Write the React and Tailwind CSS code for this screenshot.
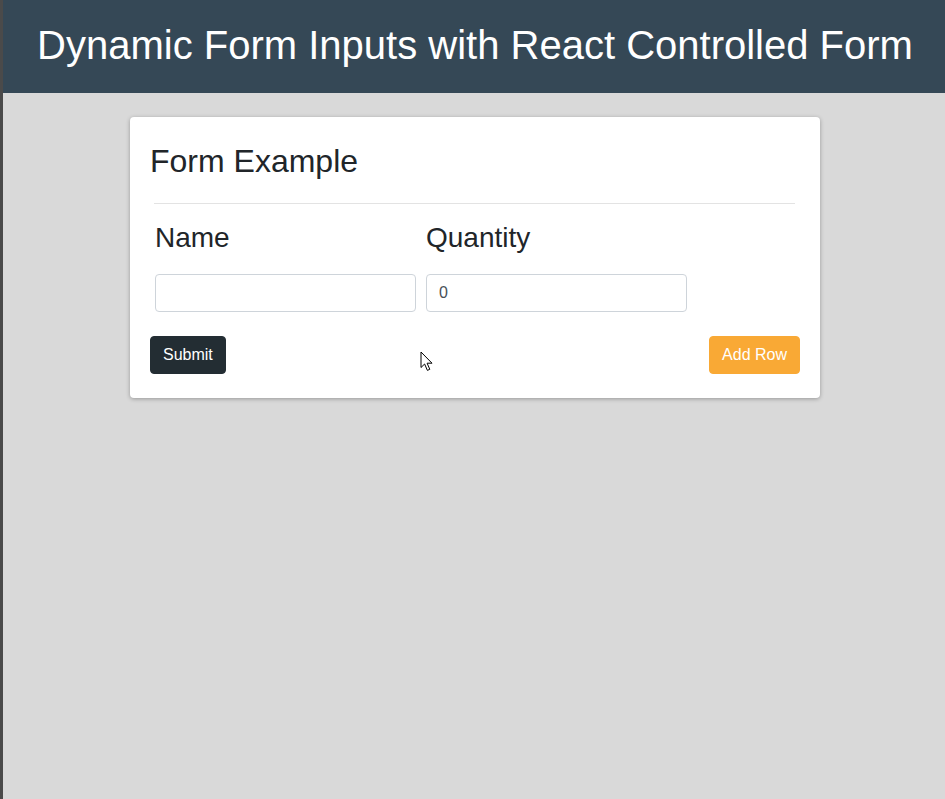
import React from 'react';

function Cursor() {
  return (
    <svg
      className="absolute left-[290px] top-[234px] pointer-events-none"
      width="14"
      height="21"
      viewBox="0 0 14 21"
    >
      <path
        d="M1 1 L1 16.5 L4.6 13 L7.4 19.4 L9.8 18.3 L7.1 12.2 L12 12.2 Z"
        fill="#ffffff"
        stroke="#000000"
        strokeWidth="1"
        strokeLinejoin="miter"
      />
    </svg>
  );
}

export default function App() {
  const rows = [{ name: '', quantity: 0 }];

  return (
    <div className="min-h-[799px] bg-[#d9d9d9] border-l-[3px] border-[#4a4a4a] font-['Liberation_Sans',Arial,sans-serif]">
      <header className="h-[93px] bg-[#354856] pt-[21px] pl-[2px] text-center">
        <h1 className="text-white text-[40px] leading-[48px]">
          Dynamic Form Inputs with React Controlled Form
        </h1>
      </header>

      <main className="flex justify-center pt-[24px] pl-[2px]">
        <div className="relative w-[690px] bg-white rounded-[4px] shadow-[0_1px_4px_rgba(0,0,0,0.3)] px-[20px] pt-[25px] pb-[24px]">
          <h2 className="text-[32px] leading-[38.4px] text-[#212529]">Form Example</h2>
          <hr className="mt-[23px] ml-[4px] mr-[5px] border-0 border-t border-[#e3e3e3]" />

          <div className="px-[5px] mt-[17px]">
            <div className="flex gap-[10px]">
              <div className="w-[261px] text-[28px] leading-[33.6px] text-[#212529]">Name</div>
              <div className="w-[261px] text-[28px] leading-[33.6px] text-[#212529]">Quantity</div>
            </div>
            {rows.map((row, i) => (
              <div key={i} className="flex gap-[10px] mt-[19px]">
                <input
                  type="text"
                  defaultValue={row.name}
                  className="w-[261px] h-[38px] border border-[#ced4da] rounded-[4px] px-[12px] text-[16px] text-[#495057] outline-none"
                />
                <input
                  type="text"
                  defaultValue={row.quantity}
                  className="w-[261px] h-[38px] border border-[#ced4da] rounded-[4px] px-[12px] text-[16px] text-[#495057] outline-none"
                />
              </div>
            ))}
          </div>

          <div className="flex justify-between mt-[24px]">
            <button className="h-[38px] px-[12px] border border-[#232d33] bg-[#232d33] rounded-[4px] text-white text-[16px] leading-[24px]">
              Submit
            </button>
            <button className="h-[38px] px-[12px] border border-[#f9a935] bg-[#f9a935] rounded-[4px] text-white text-[16px] leading-[24px]">
              Add Row
            </button>
          </div>

          <Cursor />
        </div>
      </main>
    </div>
  );
}
